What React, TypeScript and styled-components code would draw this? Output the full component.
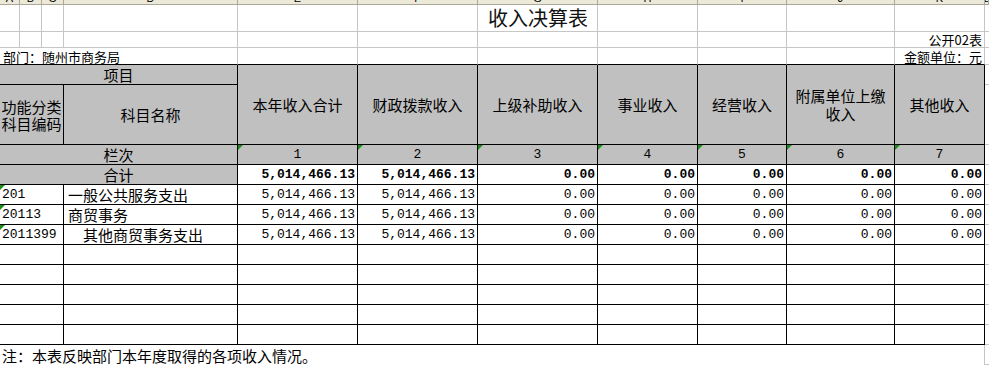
import React from 'react';
import styled, { createGlobalStyle } from 'styled-components';

const GRID = '#c6c6c6';
const INK = '#000';
const SHADE = '#c0c0c0';
const CJK = `"Noto Sans CJK SC", "Liberation Sans", sans-serif`;
const NUM = `"Liberation Mono", "Noto Sans CJK SC", monospace`;

type Align = 'left' | 'center' | 'right';
const justify = (a?: Align) => (a === 'right' ? 'flex-end' : a === 'center' ? 'center' : 'flex-start');

const GlobalStyle = createGlobalStyle`
  html, body {
    margin: 0;
    padding: 0;
    background: #fff;
    overflow: hidden;
  }
  body {
    font-family: ${CJK};
    color: #000;
  }
`;

const Sheet = styled.div`
  display: grid;
  grid-template-columns: 20px 22px 22px 174px 120px 120px 120px 100px 89px 108px 90px 1fr;
  grid-template-rows: 5px 27px 16px 17px 20px 60px repeat(10, 20px) 20px;
  width: 989px;
  height: 365px;
`;

const ColLetter = styled.div`
  box-sizing: border-box;
  background: #ece9d8;
  border-right: 1px solid #aca899;
  border-bottom: 1px solid #aca899;
  overflow: hidden;
  display: flex;
  justify-content: center;
  align-items: flex-end;
  font: 11px/11px "Liberation Sans", sans-serif;
  color: #000;
`;

const PlainCell = styled.div<{ $span?: number; $align?: Align; $open?: boolean; $edge?: boolean }>`
  box-sizing: border-box;
  grid-column: span ${p => p.$span ?? 1};
  border-right: 1px solid ${p => (p.$open ? 'transparent' : GRID)};
  border-bottom: 1px solid ${p => (p.$edge ? INK : GRID)};
  display: flex;
  align-items: flex-end;
  justify-content: ${p => justify(p.$align)};
  padding: 0 2px 0 3px;
  font-size: 13px;
  line-height: 14px;
  white-space: nowrap;
  overflow: hidden;
`;

const Title = styled.span`
  font-size: 20px;
  line-height: 22px;
  color: #111;
  padding-bottom: 2px;
`;

const Filler = styled.div`
  box-sizing: border-box;
  border-bottom: 1px solid ${GRID};
`;

const HeadCell = styled.div<{ $span?: number; $rows?: number; $num?: boolean; $tight?: boolean }>`
  position: relative;
  box-sizing: border-box;
  grid-column: span ${p => p.$span ?? 1};
  grid-row: span ${p => p.$rows ?? 1};
  background: ${SHADE};
  border-right: 1px solid ${INK};
  border-bottom: 1px solid ${INK};
  display: flex;
  align-items: center;
  justify-content: center;
  text-align: center;
  white-space: pre-line;
  font-family: ${p => (p.$num ? NUM : CJK)};
  font-size: ${p => (p.$num ? '13px' : '15px')};
  line-height: ${p => (p.$tight ? '17px' : '18px')};
`;

const BodyCell = styled.div<{ $span?: number; $align?: Align; $num?: boolean; $bold?: boolean; $indent?: number }>`
  position: relative;
  box-sizing: border-box;
  grid-column: span ${p => p.$span ?? 1};
  border-right: 1px solid ${INK};
  border-bottom: 1px solid ${INK};
  display: flex;
  align-items: center;
  justify-content: ${p => justify(p.$align)};
  padding: 0 2px 0 ${p => p.$indent ?? 2}px;
  font-family: ${p => (p.$num ? NUM : CJK)};
  font-size: ${p => (p.$num ? '13px' : '15px')};
  font-weight: ${p => (p.$bold ? 700 : 400)};
  line-height: 18px;
  white-space: nowrap;
`;

const NoteCell = styled.div`
  box-sizing: border-box;
  grid-column: span 11;
  border-right: 1px solid ${GRID};
  display: flex;
  align-items: center;
  padding-left: 2px;
  font-size: 15px;
  white-space: nowrap;
`;

const Flag = styled.i`
  position: absolute;
  top: 0;
  left: 0;
  width: 0;
  height: 0;
  border-top: 5px solid #1b8f1b;
  border-right: 5px solid transparent;
`;

const letters = 'ABCDEFGHIJKL'.split('');
const heads = ['本年收入合计', '财政拨款收入', '上级补助收入', '事业收入', '经营收入', '附属单位上缴\n收入', '其他收入'];
const total = '5,014,466.13';
const values = [total, total, '0.00', '0.00', '0.00', '0.00', '0.00'];
const items = [
  { code: '201', name: '一般公共服务支出', indent: 4 },
  { code: '20113', name: '商贸事务', indent: 4 },
  { code: '2011399', name: '其他商贸事务支出', indent: 19 },
];

const blankCols = (n: number) => Array.from({ length: n }, (_, i) => i);

const App: React.FC = () => {
  return (
    <>
      <GlobalStyle />
      <Sheet>
        {letters.map(l => (
          <ColLetter key={l}>{l}</ColLetter>
        ))}

        {/* title row */}
        {blankCols(6).map(i => (
          <PlainCell key={`t${i}`} />
        ))}
        <PlainCell $align="center">
          <Title>收入决算表</Title>
        </PlainCell>
        {blankCols(4).map(i => (
          <PlainCell key={`u${i}`} />
        ))}
        <Filler />

        {/* form number */}
        {blankCols(10).map(i => (
          <PlainCell key={`f${i}`} />
        ))}
        <PlainCell $align="right">公开02表</PlainCell>
        <Filler />

        {/* department / unit */}
        <PlainCell $span={4} $edge>部门：随州市商务局</PlainCell>
        {blankCols(6).map(i => (
          <PlainCell key={`d${i}`} $edge />
        ))}
        <PlainCell $align="right" $edge>金额单位：元</PlainCell>
        <Filler />

        {/* header */}
        <HeadCell $span={4}>项目</HeadCell>
        {heads.map(h => (
          <HeadCell key={h} $rows={2}>
            {h}
          </HeadCell>
        ))}
        <Filler />
        <HeadCell $span={3} $tight>
          {'功能分类\n科目编码'}
        </HeadCell>
        <HeadCell>科目名称</HeadCell>
        <Filler />

        <HeadCell $span={4}>栏次</HeadCell>
        {heads.map((h, i) => (
          <HeadCell key={`n${h}`} $num>
            <Flag />
            {i + 1}
          </HeadCell>
        ))}
        <Filler />

        <HeadCell $span={4}>合计</HeadCell>
        {values.map((v, i) => (
          <BodyCell key={`s${i}`} $align="right" $num $bold>
            {v}
          </BodyCell>
        ))}
        <Filler />

        {items.map(it => (
          <React.Fragment key={it.code}>
            <BodyCell $span={3} $num>
              <Flag />
              {it.code}
            </BodyCell>
            <BodyCell $indent={it.indent}>{it.name}</BodyCell>
            {values.map((v, i) => (
              <BodyCell key={i} $align="right" $num>
                {v}
              </BodyCell>
            ))}
            <Filler />
          </React.Fragment>
        ))}

        {blankCols(5).map(r => (
          <React.Fragment key={`e${r}`}>
            <BodyCell $span={3} />
            <BodyCell />
            {blankCols(7).map(i => (
              <BodyCell key={i} />
            ))}
            <Filler />
          </React.Fragment>
        ))}

        <NoteCell>注：本表反映部门本年度取得的各项收入情况。</NoteCell>
        <Filler />
      </Sheet>
    </>
  );
};

export default App;
